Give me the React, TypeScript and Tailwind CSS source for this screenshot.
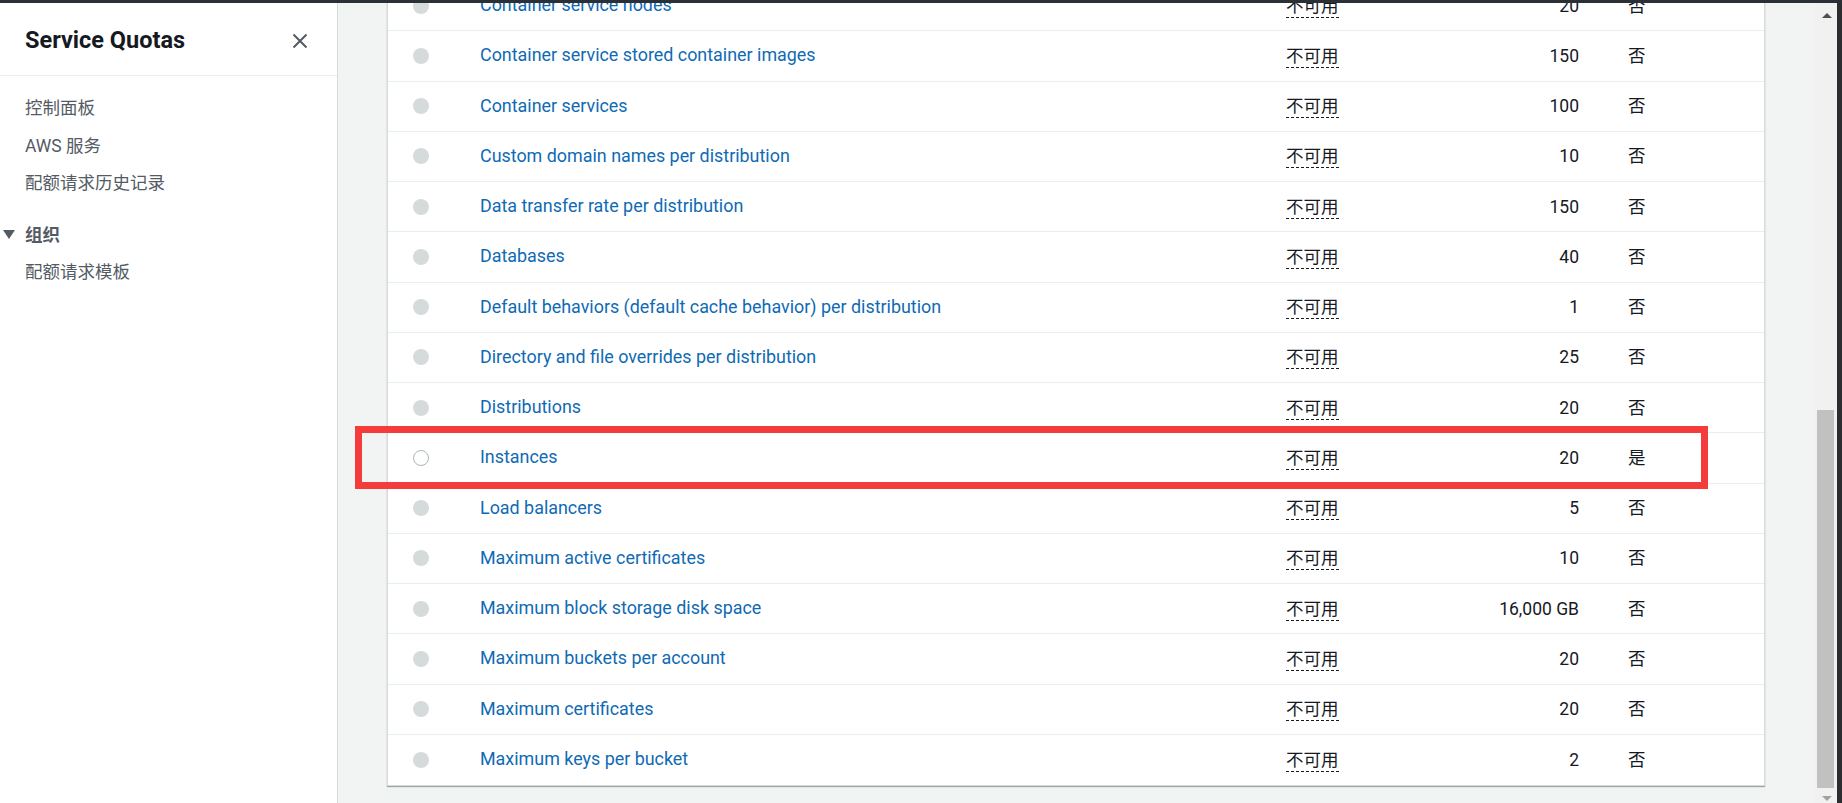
const rows = [
  { name: "Container service nodes", value: "20", adj: "否" },
  { name: "Container service stored container images", value: "150", adj: "否" },
  { name: "Container services", value: "100", adj: "否" },
  { name: "Custom domain names per distribution", value: "10", adj: "否" },
  { name: "Data transfer rate per distribution", value: "150", adj: "否" },
  { name: "Databases", value: "40", adj: "否" },
  { name: "Default behaviors (default cache behavior) per distribution", value: "1", adj: "否" },
  { name: "Directory and file overrides per distribution", value: "25", adj: "否" },
  { name: "Distributions", value: "20", adj: "否" },
  { name: "Instances", value: "20", adj: "是", marked: true },
  { name: "Load balancers", value: "5", adj: "否" },
  { name: "Maximum active certificates", value: "10", adj: "否" },
  { name: "Maximum block storage disk space", value: "16,000 GB", adj: "否" },
  { name: "Maximum buckets per account", value: "20", adj: "否" },
  { name: "Maximum certificates", value: "20", adj: "否" },
  { name: "Maximum keys per bucket", value: "2", adj: "否" },
];

const font = "font-['Roboto','Noto_Sans_CJK_SC',sans-serif]";

const Sidebar = () => (
  <aside className="w-[338px] shrink-0 bg-white border-r border-[#d5dbdb]">
    <div className="h-[73px] flex items-center justify-between pt-[3px] pl-[25px] pr-[29px] border-b border-[#eaeded]">
      <h2 className="text-[23.5px] font-bold text-[#16191f] pt-[1px]">Service Quotas</h2>
      <svg width="16" height="16" viewBox="0 0 16 16">
        <path d="M1.5 1.5 L14.5 14.5 M14.5 1.5 L1.5 14.5" stroke="#545b64" strokeWidth="2" />
      </svg>
    </div>
    <ul className="pt-[13.5px] text-[17.5px] text-[#545b64]">
      <li className="h-[37.5px] flex items-center pl-[25px]">控制面板</li>
      <li className="h-[37.5px] flex items-center pl-[25px]">AWS 服务</li>
      <li className="h-[37.5px] flex items-center pl-[25px]">配额请求历史记录</li>
      <li className="mt-[14px] h-[37.5px] flex items-center font-bold">
        <span className="w-0 h-0 ml-[3px] mr-[10px] border-x-[6px] border-x-transparent border-t-[9px] border-t-[#545b64]" />
        组织
      </li>
      <li className="h-[37.5px] flex items-center pl-[25px]">配额请求模板</li>
    </ul>
  </aside>
);

const Radio = ({ on }: { on?: boolean }) =>
  on ? (
    <span className="block w-[16px] h-[16px] rounded-full bg-white border border-[#aab7b8]" />
  ) : (
    <span className="block w-[16px] h-[16px] rounded-full bg-[#d5dbdb]" />
  );

const Scrollbar = () => (
  <div className="w-[22px] shrink-0 flex flex-col bg-[#f1f1f1]">
    <div className="h-[24px] flex items-center justify-center pl-[1px]">
      <span className="w-0 h-0 border-x-[5px] border-x-transparent border-b-[5px] border-b-[#505050]" />
    </div>
    <div className="flex-1 flex flex-col justify-end pl-[2px] pr-[3px]">
      <div className="h-[378px] bg-[#c1c1c1]" />
    </div>
    <div className="h-[15px] flex items-end justify-center pb-[2px] pl-[1px]">
      <span className="w-0 h-0 border-x-[5px] border-x-transparent border-t-[5px] border-t-[#a3a3a3]" />
    </div>
  </div>
);

export default function App() {
  return (
    <div className={`w-[1842px] h-[803px] flex flex-col overflow-hidden bg-[#f2f3f3] ${font}`}>
      <div className="h-[3px] shrink-0 bg-[#2b2f36]" />
      <div className="flex flex-1 min-h-0">
        <Sidebar />
        <main className="flex-1 overflow-hidden pl-[49px] pr-[50px]">
          <div className="-mt-[22px] bg-white border-x border-b border-[#d5dbdb] shadow-[0_1px_1px_0_rgba(0,28,36,0.35)]">
            {rows.map((r) => (
              <div
                key={r.name}
                className="relative h-[50.25px] grid grid-cols-[92px_806px_150px_143px_1fr] items-center text-[17.5px] border-b border-[#eaeded] last:border-b-0"
              >
                <div className="pl-[25px]">
                  <Radio on={r.marked} />
                </div>
                <div className="text-[#0f6ab4] text-[17.9px]">{r.name}</div>
                <div>
                  <span className="text-[#16191f] border-b border-dashed border-[#16191f] pb-[1px]">不可用</span>
                </div>
                <div className="text-right text-[#16191f]">{r.value}</div>
                <div className="pl-[49px] text-[#16191f]">{r.adj}</div>
                {r.marked && (
                  <div className="absolute -left-[33px] -top-[7px] w-[1353px] h-[63px] border-[7px] border-[#f43c3c]" />
                )}
              </div>
            ))}
          </div>
        </main>
        <Scrollbar />
        <div className="w-[5px] shrink-0 bg-[#2b2d31]" />
      </div>
    </div>
  );
}
